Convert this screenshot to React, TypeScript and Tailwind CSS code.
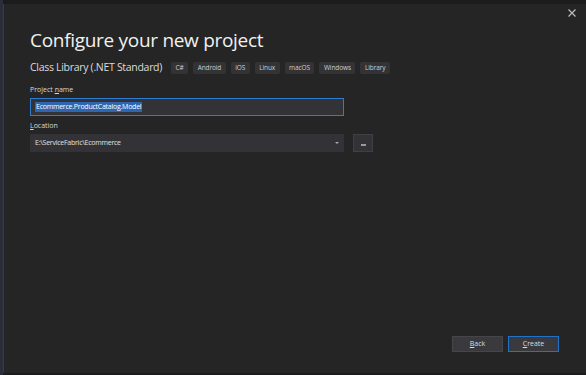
import React from 'react';

const tags = ['C#', 'Android', 'iOS', 'Linux', 'macOS', 'Windows', 'Library'];

const App: React.FC = () => {
    return (
        <div className="w-[586px] h-[375px] bg-[#1c1c1e] flex overflow-hidden" style={{ fontFamily: '"Open Sans", "Noto Sans", sans-serif' }}>
            <div className="w-[3px] h-full bg-[#2b2d3a]"></div>
            <div className="flex-1 flex flex-col mt-[4px] mb-[2px] bg-[#252526] border-l border-[#3a3a3c] relative">
                <button className="absolute right-[8px] top-[3px] w-[12px] h-[12px] flex items-center justify-center text-[#bbbbbb]">
                    <svg width="8" height="8" viewBox="0 0 8 8" fill="none" stroke="currentColor" strokeWidth="1.2"><path d="M0.5 0.5l7 7M7.5 0.5l-7 7" /></svg>
                </button>

                <div className="pl-[26px] pt-[23px] flex flex-col">
                    <h1 className="text-[19px] leading-[26px] text-[#f1f1f1] tracking-[-0.3px]">Configure your new project</h1>

                    <div className="flex items-center mt-[8px] h-[14px]">
                        <span className="text-[10.5px] text-[#dcdcdc] tracking-[-0.3px] mr-[9px]">Class Library (.NET Standard)</span>
                        <div className="flex gap-[5px]">
                            {tags.map((t) => (
                                <span key={t} className="h-[12px] px-[4.5px] bg-[#333336] rounded-[2px] text-[6.5px] leading-[12px] text-[#cfcfcf] tracking-[-0.1px]">{t}</span>
                            ))}
                        </div>
                    </div>

                    <label className="mt-[10px] text-[7px] leading-[10px] text-[#d8d8d8]">Project <span className="underline">n</span>ame</label>
                    <div className="mt-[3px] w-[314px] h-[18px] bg-[#333337] border border-[#2e7bcf] flex items-center px-[4px]">
                        <span className="bg-[#2f66b0] text-white text-[7px] leading-[10px] px-[1px] tracking-[-0.25px]">Ecommerce.ProductCatalog.Model</span>
                    </div>

                    <label className="mt-[5px] text-[7px] leading-[10px] text-[#d8d8d8]"><span className="underline">L</span>ocation</label>
                    <div className="mt-[3px] flex gap-[9px]">
                        <div className="w-[314px] h-[18px] bg-[#333337] flex items-center justify-between px-[5px]">
                            <span className="text-[7px] text-[#e0e0e0] tracking-[-0.25px]">E:\ServiceFabric\Ecommerce</span>
                            <span className="w-0 h-0 border-l-[2px] border-r-[2px] border-t-[2px] border-l-transparent border-r-transparent border-t-[#aaaaaa]"></span>
                        </div>
                        <button className="w-[20px] h-[18px] bg-[#333337] border border-[#3f3f44] flex items-center justify-center">
                            <span className="block w-[5px] h-[2px] mt-[4px] bg-[#9a9a9a]"></span>
                        </button>
                    </div>
                </div>

                <div className="flex-1"></div>

                <div className="flex justify-end gap-[5px] pr-[27px] pb-[21px]">
                    <button className="w-[51px] h-[16px] bg-[#3a3a3e] border border-[#46464a] text-[7px] text-[#dcdcdc]"><span className="underline">B</span>ack</button>
                    <button className="w-[51px] h-[16px] bg-[#3a3a3e] border border-[#1f74c9] text-[7px] text-[#dcdcdc]"><span className="underline">C</span>reate</button>
                </div>
            </div>
        </div>
    );
};

export default App;
